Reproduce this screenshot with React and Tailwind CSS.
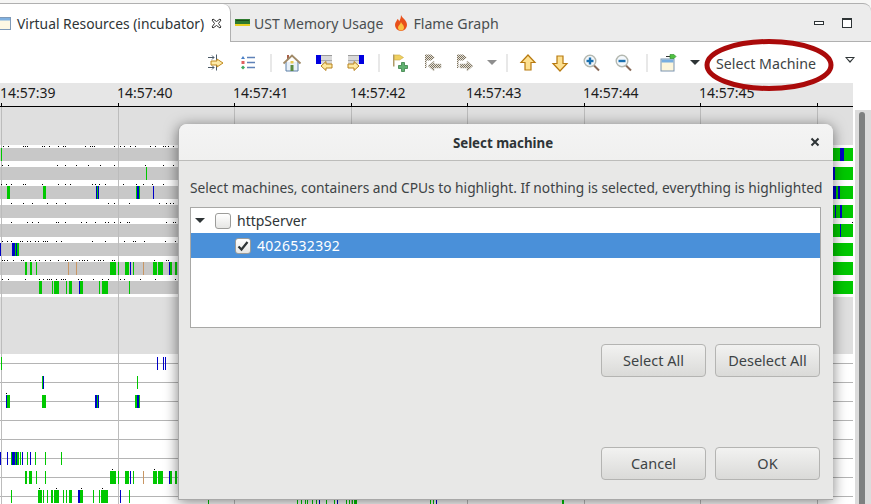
import React from "react";

const GREEN = "#00c800";
const BLUE = "#0000c8";
const ORANGE = "#c89664";
const g = (x, w = 1) => [x, w, GREEN];
const b = (x, w = 1) => [x, w, BLUE];
const o = (x) => [x, 1, ORANGE];

const ticks = [
  { label: "14:57:39", x: 1 },
  { label: "14:57:40", x: 118 },
  { label: "14:57:41", x: 234 },
  { label: "14:57:42", x: 351 },
  { label: "14:57:43", x: 467 },
  { label: "14:57:44", x: 584 },
  { label: "14:57:45", x: 700 },
  { label: "", x: 817 },
];

const rightEdge = [
  [b(840, 2), b(842, 2)],
  [b(833, 2)],
  [b(833, 3), b(838, 2)],
  [b(835), b(840, 2)],
  [b(840)],
  [],
  [],
  [],
];

const topBars = [
  [g(1)],
  [g(146)],
  [g(7, 3), g(43, 3), b(96), b(98, 1), g(97), g(136), b(137, 2), g(139), b(153)],
  [],
  [],
  [b(0), b(12, 3), g(15), b(16), g(17, 2)],
  [g(25, 2), g(30, 2), g(36), o(68), o(76), g(110, 6), g(118), g(125, 4), b(130), g(133), o(143), g(153, 4), g(158, 5), b(169), g(170, 2), g(175, 2)],
  [g(39, 3), g(52), g(54, 5), g(66), g(69, 3), b(79), g(80, 3), g(99), g(102, 6), g(129)],
];

const topDots = [
  [3, 8, 23, 25, 27, 42, 44, 49, 58, 63, 65, 85, 90, 92, 94, 114, 120, 124, 130, 135, 150, 155, 163, 165, 168, 173],
  [2, 8, 57, 65, 76, 88, 100, 114, 145, 163, 173],
  [1, 6, 11, 23, 25, 42, 58, 65, 70, 92, 95, 99, 105, 123, 136, 143, 152, 163],
  [11, 23, 32, 47, 56, 65, 108, 114, 129, 159, 166, 170, 173],
  [11, 27, 32, 38, 56, 58, 65, 81, 86, 95, 105, 108, 114, 120, 127, 129, 166, 173, 175],
  [2, 7, 11, 20, 22, 27, 30, 35, 38, 43, 45, 47, 56, 61, 92, 105, 124, 133, 135, 144, 165, 175],
  [2, 4, 7, 13, 21, 23, 30, 35, 39, 45, 50, 58, 65, 67, 72, 79, 82, 84, 87, 94, 98, 100, 103, 112, 114, 154, 166, 168],
  [2, 8, 25, 39, 43, 47, 49, 51, 56, 61, 63, 65, 78, 81, 93, 102, 108, 120, 124, 140, 155, 175],
];

const bottomBars = [
  [g(1), b(157), b(163), b(165)],
  [g(42), b(43), g(137)],
  [b(6), g(7, 3), g(42, 4), b(95, 2), b(98), g(97), g(135, 2), b(137, 2), g(139)],
  [],
  [],
  [b(0), b(7), g(11), b(12, 3), g(15), b(16), g(17, 2), g(20), b(22), g(27), b(30), g(35), g(45), g(61)],
  [g(25, 2), g(29, 3), g(36), g(45), g(110, 6), g(118), g(125, 4), b(130), g(133), o(143), g(153, 4), g(158, 5), b(169), g(170, 2), g(175, 2)],
  [g(11), g(38, 4), g(43), g(47), g(51, 2), g(54, 5), g(63), g(66), g(69, 3), b(78, 2), g(80, 3), g(93), g(99), g(101, 7), b(120), g(129)],
];

const bottomStrip = [
  g(208), g(297), g(301), g(305), g(307), g(312), g(316), b(319), g(326), g(334), b(337), g(346), g(349), g(352), g(354, 3), g(430), g(433), b(436), g(562, 2),
];

function Chart() {
  return (
    <svg className="block" width="853" height="397" viewBox="0 107 853 397" shapeRendering="crispEdges">
      <rect x="0" y="107" width="853" height="247" fill="#dfdfdf" />
      <rect x="0" y="354" width="853" height="150" fill="#ffffff" />
      <rect x="0" y="145" width="853" height="152" fill="#ffffff" />
      {topBars.map((_, i) => (
        <rect key={i} x="0" y={148 + 19 * i} width="853" height="13" fill="#c8c8c8" />
      ))}
      {[0, 1, 2, 3, 4, 5, 6, 7].map((i) => (
        <rect key={i} x="0" y={363 + 19 * i} width="853" height="1" fill="#b4b4b4" />
      ))}
      {ticks.map((t) => (
        <rect key={t.x} x={t.x} y="107" width="1" height="397" fill="#bcbcbc" />
      ))}
      {topBars.map((row, i) =>
        row.map(([x, w, c], j) => <rect key={j} x={x} y={148 + 19 * i} width={w} height="13" fill={c} />)
      )}
      {rightEdge.map((row, i) => (
        <g key={i}>
          <rect x="830" y={148 + 19 * i} width="23" height="13" fill={GREEN} />
          {row.map(([x, w, c], j) => (
            <rect key={j} x={x} y={148 + 19 * i} width={w} height="13" fill={c} />
          ))}
        </g>
      ))}
      {topDots.map((row, i) =>
        row.map((x) => <rect key={x} x={x} y={146 + 19 * i} width="1" height="1" fill="#000000" />)
      )}
      <rect x="852" y="222" width="1" height="1" fill="#000000" />
      {bottomBars.map((row, i) =>
        row.map(([x, w, c], j) => <rect key={j} x={x} y={357 + 19 * i} width={w} height="13" fill={c} />)
      )}
      {[[6, 393], [112, 469], [154, 469], [39, 488], [56, 488], [81, 488], [102, 488]].map(([x, y]) => (
        <rect key={x} x={x} y={y} width="1" height="1" fill="#000000" />
      ))}
      {bottomStrip.map(([x, w, c]) => (
        <rect key={x} x={x} y="500" width={w} height="4" fill={c} />
      ))}
    </svg>
  );
}

const icon = { width: 20, height: 20, viewBox: "0 0 20 20", className: "block" };

function AlignIcon() {
  return (
    <svg {...icon}>
      <path d="M2 4.500h6M6 2.500l2 2-2 2M10.500 1.500v6M2 14.500h6M6 12.500l2 2-2 2M10.500 11.500v6" fill="none" stroke="#4a5a68" />
      <path d="M5 8h6V6l6 4-6 4v-2H5z" fill="#fdeaa8" stroke="#c08a1e" />
    </svg>
  );
}

function LegendIcon() {
  return (
    <svg {...icon}>
      <path d="M4 3l2 3H2z" fill="#4a80c8" />
      <rect x="2.500" y="8" width="3" height="3" fill="#e06060" />
      <path d="M4 12.500l2 2-2 2-2-2z" fill="#40a860" />
      <path d="M8 4.500h8M8 9.500h8M8 14.500h8" stroke="#5f82b8" strokeWidth="1.400" />
    </svg>
  );
}

function HomeIcon() {
  return (
    <svg {...icon}>
      <rect x="5" y="2" width="2" height="4" fill="#a86048" />
      <path d="M4 9v9h12V9" fill="#e8f0f8" stroke="#5d80a8" />
      <path d="M1.500 10.500L10 2.500l8.500 8" fill="none" stroke="#a08a68" strokeWidth="1.800" />
      <rect x="8.500" y="12" width="3" height="6" fill="#5a8a40" />
      <rect x="8.500" y="8" width="3" height="2.500" fill="#e8c850" />
    </svg>
  );
}

function BookmarkArrow({ flip }) {
  return (
    <svg {...icon} style={flip ? { transform: "scaleX(-1)" } : undefined}>
      <rect x="2" y="2" width="16" height="9" fill="#d8d8d8" />
      <rect x="7" y="2" width="11" height="1" fill="#9a9a9a" />
      <rect x="7" y="7" width="11" height="1" fill="#a8a8a8" />
      <rect x="2" y="2" width="5" height="9" fill="#0000e0" />
      <path d="M18 11h-6V8.500L7 13l5 4.500V15h6z" fill="#fde9a0" stroke="#b8821e" />
    </svg>
  );
}

function FlagPlusIcon() {
  return (
    <svg {...icon}>
      <rect x="2" y="1.500" width="1.500" height="12" fill="#b09a68" />
      <path d="M3.500 2h5l4 2.500-4 2.500h-5z" fill="#f0d060" stroke="#c8a840" strokeWidth="0.600" />
      <path d="M10.500 9.500h3v3h3v3h-3v3h-3v-3h-3v-3h3z" fill="#60b070" stroke="#3a8048" strokeWidth="0.800" />
    </svg>
  );
}

function DitherIcon({ right, id }) {
  return (
    <svg {...icon}>
      <defs>
        <pattern id={id} width="2" height="2" patternUnits="userSpaceOnUse">
          <rect width="2" height="2" fill="#e8e4d8" />
          <rect width="1" height="1" fill="#7a7060" />
          <rect x="1" y="1" width="1" height="1" fill="#7a7060" />
        </pattern>
      </defs>
      <path d="M2 1.500h6l4 3-4 3H3.500V15H2z" fill={`url(#${id})`} />
      {right ? (
        <path d="M5 11h7V8l6 5-6 5v-3H5z" fill={`url(#${id})`} stroke="#b8b4a8" strokeWidth="0.500" />
      ) : (
        <path d="M18 11h-7V8l-6 5 6 5v-3h7z" fill={`url(#${id})`} stroke="#b8b4a8" strokeWidth="0.500" />
      )}
    </svg>
  );
}

function VerticalArrow({ down }) {
  return (
    <svg {...icon} style={down ? { transform: "scaleY(-1)" } : undefined}>
      <path d="M10 2l7 7.500h-4v7.500H7V9.500H3z" fill="#fde090" stroke="#b87a10" strokeWidth="1.200" />
    </svg>
  );
}

function ZoomIcon({ plus }) {
  return (
    <svg {...icon}>
      <path d="M11.500 12l5.500 5.500" stroke="#8a6a58" strokeWidth="2" />
      <circle cx="8" cy="8" r="5.800" fill="#f4f8fc" stroke="#b4b8b0" strokeWidth="1.400" />
      <rect x="4.500" y="6.800" width="7" height="2.400" fill="#1a70b0" />
      {plus && <rect x="6.800" y="4.500" width="2.400" height="7" fill="#1a70b0" />}
    </svg>
  );
}

function WindowPinIcon() {
  return (
    <svg {...icon}>
      <rect x="3" y="6" width="13" height="12" fill="#fdf6dc" stroke="#7a94b0" />
      <rect x="3.500" y="6.500" width="12" height="3" fill="#78aee0" />
      <path d="M8 3.500h5" stroke="#333333" />
      <path d="M12 1.500h4l2 2-2 2h-4z" fill="#50c040" stroke="#2a8a2a" strokeWidth="0.600" />
    </svg>
  );
}

function ToolSlot({ children }) {
  return <div className="flex w-8 items-center justify-center">{children}</div>;
}

function Caret({ color = "border-t-[#2e3436]" }) {
  return (
    <div className="flex w-[22px] items-center justify-center">
      <div className={`h-0 w-0 border-x-[5px] border-t-[5px] border-x-transparent ${color}`} />
    </div>
  );
}

function Separator({ className }) {
  return <div className={`h-[18px] w-[2px] bg-[#e8e8e8] ${className}`} />;
}

function Toolbar() {
  return (
    <div className="relative flex h-[41px] items-center bg-white pl-[200px]">
      <ToolSlot><AlignIcon /></ToolSlot>
      <div className="ml-px"><ToolSlot><LegendIcon /></ToolSlot></div>
      <Separator className="ml-[5px] mr-[4px]" />
      <ToolSlot><HomeIcon /></ToolSlot>
      <ToolSlot><BookmarkArrow /></ToolSlot>
      <ToolSlot><BookmarkArrow flip /></ToolSlot>
      <Separator className="ml-[6px] mr-[5px]" />
      <ToolSlot><FlagPlusIcon /></ToolSlot>
      <ToolSlot><DitherIcon id="dither-left" /></ToolSlot>
      <ToolSlot><DitherIcon right id="dither-right" /></ToolSlot>
      <Caret color="border-t-[#8e8e8e]" />
      <Separator className="ml-[3px] mr-[4px]" />
      <ToolSlot><VerticalArrow /></ToolSlot>
      <ToolSlot><VerticalArrow down /></ToolSlot>
      <ToolSlot><ZoomIcon plus /></ToolSlot>
      <ToolSlot><ZoomIcon /></ToolSlot>
      <Separator className="ml-[6px] mr-[4px]" />
      <ToolSlot><WindowPinIcon /></ToolSlot>
      <Caret />
      <span className="ml-[10px] pt-[2px] text-[14.2px] text-[#3d4345]">Select Machine</span>
      <div className="absolute left-[845px] top-[15px] h-0 w-0 border-x-[5px] border-t-[6px] border-x-transparent border-t-[#2e3436]">
        <div className="absolute left-[-3px] top-[-5px] h-0 w-0 border-x-[3px] border-t-[3px] border-x-transparent border-t-white" />
      </div>
    </div>
  );
}

function TabBar() {
  return (
    <div className="h-[42px] bg-[#f6f6f5] pt-[3px]">
      <div className="flex h-[39px] rounded-tr-lg border-t border-b border-[#b0b0b0] bg-[#ececec]">
        <div className="-mb-px flex w-[231px] items-center rounded-tr-lg border-r border-[#b0b0b0] bg-white">
          <svg width="11" height="13" viewBox="0 0 11 13" className="mr-[6px]">
            <rect x="-3" y="0.500" width="13.500" height="12" fill="#fdf8e4" stroke="#7f9ab8" />
            <rect x="-3" y="1" width="13" height="2.500" fill="#7fb0e0" />
          </svg>
          <span className="pt-[3px] text-[13.85px] text-[#2e3436]">Virtual Resources (incubator)</span>
          <svg width="11" height="11" viewBox="0 0 11 11" className="ml-[7px]">
            <path d="M1 2l1-1 3.500 2.500L9 1l1 1-2.500 3.500L10 9l-1 1-3.500-2.500L2 10 1 9l2.500-3.500z" fill="#ffffff" stroke="#333333" />
          </svg>
        </div>
        <div className="flex flex-1 items-center pl-[4px]">
          <svg width="15" height="8" viewBox="0 0 15 8" className="mr-[4px]">
            <rect x="0" y="0" width="15" height="5" fill="#2e7a2e" />
            <rect x="1" y="1" width="13" height="1" fill="#1a4a1a" />
            <rect x="0" y="5" width="15" height="2" fill="#e8d020" />
          </svg>
          <span className="pt-px text-[14px] text-[#4a4f50]">UST Memory Usage</span>
          <svg width="14" height="16" viewBox="0 0 14 16" className="ml-[11px] mr-[5px]">
            <path d="M7 0c1 3 6 5 6 10a6 6 0 0 1-12 0c0-3 2-4 2.500-6 1 .5 1.500 1.500 1.500 2.500C6 5 7 3 7 0z" fill="#e8501a" />
            <path d="M7 7c.5 2 3 3 3 5.500a3 3 0 0 1-6 0C4 10.500 6.500 9.500 7 7z" fill="#fcc040" />
          </svg>
          <span className="pt-[3px] text-[14.2px] text-[#4a4f50]">Flame Graph</span>
          <div className="ml-auto flex items-center">
            <div className="h-[4px] w-[10px] border border-[#2e3436] bg-white" />
            <div className="ml-[18px] mr-[19px] h-[10px] w-[10px] border border-[#2e3436] border-t-2 bg-white" />
          </div>
        </div>
      </div>
    </div>
  );
}

function TimeScale() {
  return (
    <div className="relative h-6 w-[853px] border-b border-black bg-[#e6e6e6] text-[14px] text-[#1c1c1c]">
      {ticks.map((t) => (
        <div key={t.x} className="absolute bottom-0 top-0" style={{ left: t.x }}>
          <span className="-ml-px block leading-[19px]">{t.label}</span>
          <div className="absolute bottom-0 left-0 h-[3px] w-px bg-black" />
        </div>
      ))}
    </div>
  );
}

function Checkbox({ checked }) {
  return (
    <div className="flex h-4 w-4 items-center justify-center rounded-[3px] border border-[#9c9c9a] bg-gradient-to-b from-white to-[#e6e6e4]">
      {checked && (
        <svg width="12" height="12" viewBox="0 0 12 12">
          <path d="M1.500 6.500l3 3 6-7.500" fill="none" stroke="#2e3436" strokeWidth="2.200" />
        </svg>
      )}
    </div>
  );
}

function DialogButton({ children }) {
  return (
    <button className="h-[33px] w-[105px] rounded-[4px] border border-[#b4b4b2] bg-gradient-to-b from-[#f2f2f1] to-[#dadad8] text-[14.5px] text-[#3d4345]">
      {children}
    </button>
  );
}

function Dialog() {
  return (
    <div className="absolute left-[178px] top-[124px] flex h-[376px] w-[655px] flex-col rounded-t-lg border-b border-l border-[#a8a8a8] bg-[#e8e8e7] shadow-[0_2px_14px_rgba(0,0,0,0.5)]">
      <div className="relative flex h-[37px] shrink-0 items-center justify-center rounded-t-lg border-b border-[#bcbcba] bg-gradient-to-b from-[#f4f4f4] to-[#f0f0ef] pr-[6px] pt-[4px]">
        <span className="text-[13.3px] font-bold text-[#2e3436]">Select machine</span>
        <svg width="10" height="10" viewBox="0 0 10 10" className="absolute right-[13px] top-[13px]">
          <path d="M1.500 1.500l7 7M8.500 1.500l-7 7" stroke="#2e3436" strokeWidth="2" />
        </svg>
      </div>
      <div className="flex flex-1 flex-col pb-[19px] pl-[11px] pr-3">
        <p className="mt-[16px] h-[30px] whitespace-nowrap text-[13.75px] leading-[22px] text-[#3d4345]">
          Select machines, containers and CPUs to highlight. If nothing is selected, everything is highlighted
        </p>
        <div className="h-[121px] border border-[#a8a8a6] bg-white text-[14px]">
          <div className="flex h-[25px] items-center text-[#2e3436]">
            <div className="ml-[4px] mr-[10px] h-0 w-0 border-x-[5px] border-t-[5px] border-x-transparent border-t-[#2e3436]" />
            <Checkbox />
            <span className="ml-[6px]">httpServer</span>
          </div>
          <div className="flex h-[25px] items-center bg-[#4a90d9] pl-[44px] text-white">
            <Checkbox checked />
            <span className="ml-[6px] tracking-[0.3px]">4026532392</span>
          </div>
        </div>
        <div className="mr-px mt-4 flex justify-end gap-[9px]">
          <DialogButton>Select All</DialogButton>
          <DialogButton>Deselect All</DialogButton>
        </div>
        <div className="mr-px mt-auto flex justify-end gap-[9px]">
          <DialogButton>Cancel</DialogButton>
          <DialogButton>OK</DialogButton>
        </div>
      </div>
    </div>
  );
}

function Scrollbar() {
  return (
    <div className="flex w-[18px] bg-white">
      <div className="ml-[2px] mt-[3px] flex flex-1 bg-[#dcdcdc] pl-[4px] pr-[6px] pt-[2px]">
        <div className="h-full w-[6px] rounded-t-[3px] bg-[#7e8080]" />
      </div>
    </div>
  );
}

export default function App() {
  return (
    <div className="relative h-[504px] w-[871px] overflow-hidden bg-white font-['Noto_Sans',sans-serif]">
      <TabBar />
      <Toolbar />
      <TimeScale />
      <div className="flex h-[397px]">
        <Chart />
        <Scrollbar />
      </div>
      <svg className="absolute left-[700px] top-[36px]" width="140" height="60" viewBox="0 0 140 60">
        <ellipse cx="69" cy="29" rx="62" ry="23.500" fill="none" stroke="#aa0a0a" strokeWidth="5" />
      </svg>
      <Dialog />
    </div>
  );
}
